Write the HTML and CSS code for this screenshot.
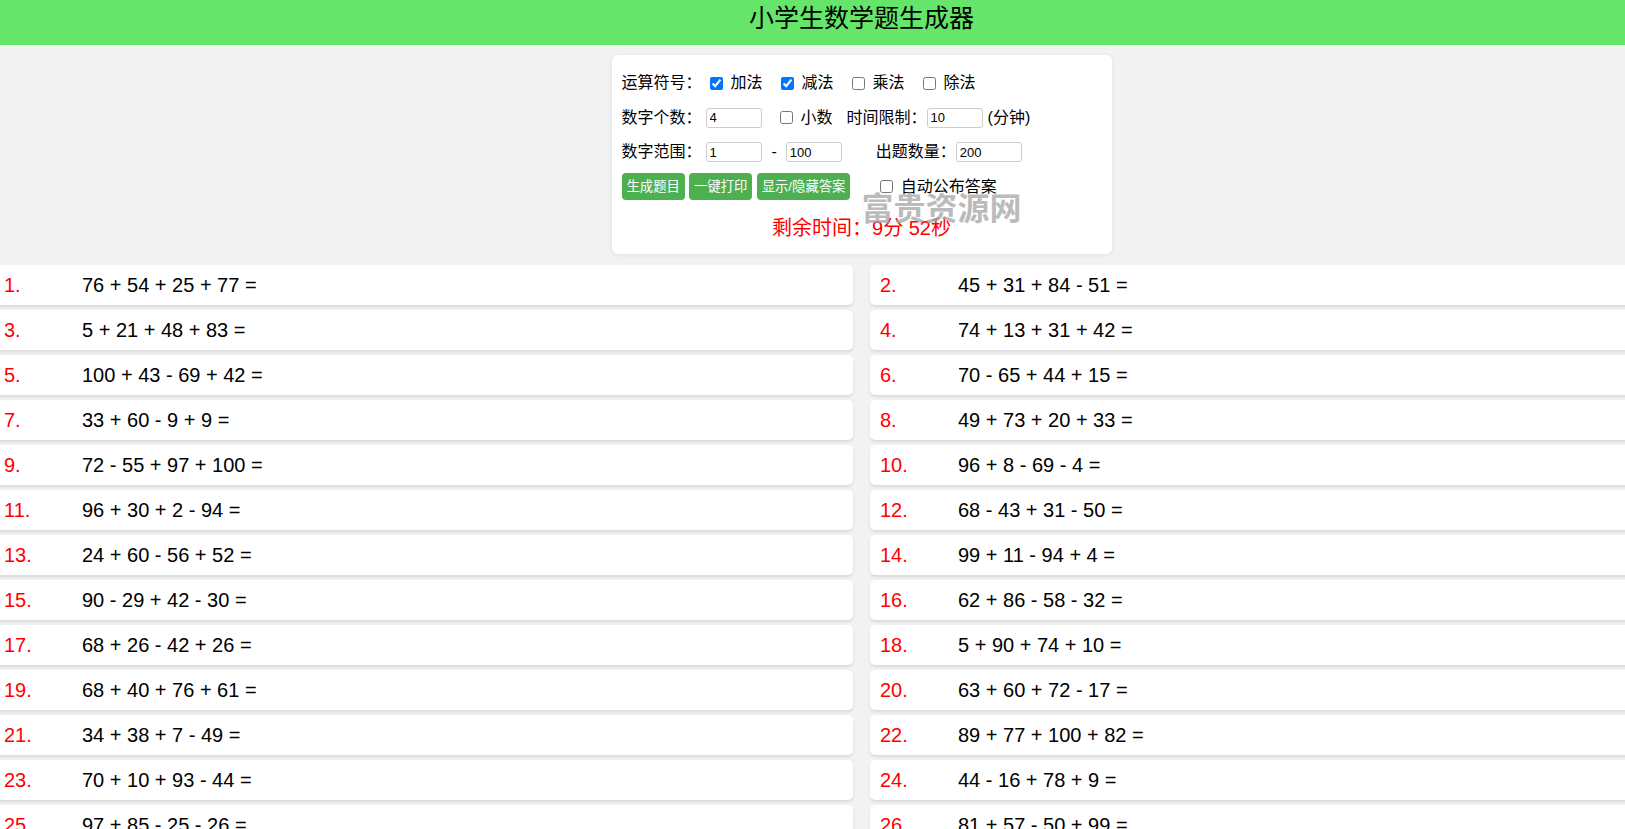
FILE: index.html
```html
<!DOCTYPE html>
<html lang="zh-CN">
<head>
  <meta charset="UTF-8" />
  <title>小学生数学题生成器</title>
  <meta name="viewport" content="width=device-width, initial-scale=1.0">
  <link rel="stylesheet" href="styles.css">
</head>
<body>
<div class="page">

<header class="top-bar">
  <h1>小学生数学题生成器</h1>
</header>

<div class="panel">
  <div class="row">
    <span class="label">运算符号：</span>
    <label class="opt"><input type="checkbox" checked><span>加法</span></label>
    <label class="opt"><input type="checkbox" checked><span>减法</span></label>
    <label class="opt"><input type="checkbox"><span>乘法</span></label>
    <label class="opt"><input type="checkbox"><span>除法</span></label>
  </div>

  <div class="row">
    <span class="label">数字个数：</span>
    <input class="field first" type="text" value="4">
    <label class="opt decimal"><input type="checkbox"><span>小数</span></label>
    <span class="label">时间限制：</span>
    <input class="field" type="text" value="10">
    <span class="unit">(分钟)</span>
  </div>

  <div class="row">
    <span class="label">数字范围：</span>
    <input class="field first" type="text" value="1">
    <span class="dash">-</span>
    <input class="field" type="text" value="100">
    <span class="label count-label">出题数量：</span>
    <input class="field wide" type="text" value="200">
  </div>

  <div class="row">
    <button class="btn">生成题目</button>
    <button class="btn">一键打印</button>
    <button class="btn">显示/隐藏答案</button>
    <label class="opt auto"><input type="checkbox"><span>自动公布答案</span></label>
  </div>

  <div class="timer">剩余时间：9分 52秒</div>

  <div class="watermark">富贵资源网</div>
</div>

<div class="questions">
  <div class="question"><span class="qnum">1.</span><span>76 + 54 + 25 + 77 =</span></div>
  <div class="question"><span class="qnum">2.</span><span>45 + 31 + 84 - 51 =</span></div>
  <div class="question"><span class="qnum">3.</span><span>5 + 21 + 48 + 83 =</span></div>
  <div class="question"><span class="qnum">4.</span><span>74 + 13 + 31 + 42 =</span></div>
  <div class="question"><span class="qnum">5.</span><span>100 + 43 - 69 + 42 =</span></div>
  <div class="question"><span class="qnum">6.</span><span>70 - 65 + 44 + 15 =</span></div>
  <div class="question"><span class="qnum">7.</span><span>33 + 60 - 9 + 9 =</span></div>
  <div class="question"><span class="qnum">8.</span><span>49 + 73 + 20 + 33 =</span></div>
  <div class="question"><span class="qnum">9.</span><span>72 - 55 + 97 + 100 =</span></div>
  <div class="question"><span class="qnum">10.</span><span>96 + 8 - 69 - 4 =</span></div>
  <div class="question"><span class="qnum">11.</span><span>96 + 30 + 2 - 94 =</span></div>
  <div class="question"><span class="qnum">12.</span><span>68 - 43 + 31 - 50 =</span></div>
  <div class="question"><span class="qnum">13.</span><span>24 + 60 - 56 + 52 =</span></div>
  <div class="question"><span class="qnum">14.</span><span>99 + 11 - 94 + 4 =</span></div>
  <div class="question"><span class="qnum">15.</span><span>90 - 29 + 42 - 30 =</span></div>
  <div class="question"><span class="qnum">16.</span><span>62 + 86 - 58 - 32 =</span></div>
  <div class="question"><span class="qnum">17.</span><span>68 + 26 - 42 + 26 =</span></div>
  <div class="question"><span class="qnum">18.</span><span>5 + 90 + 74 + 10 =</span></div>
  <div class="question"><span class="qnum">19.</span><span>68 + 40 + 76 + 61 =</span></div>
  <div class="question"><span class="qnum">20.</span><span>63 + 60 + 72 - 17 =</span></div>
  <div class="question"><span class="qnum">21.</span><span>34 + 38 + 7 - 49 =</span></div>
  <div class="question"><span class="qnum">22.</span><span>89 + 77 + 100 + 82 =</span></div>
  <div class="question"><span class="qnum">23.</span><span>70 + 10 + 93 - 44 =</span></div>
  <div class="question"><span class="qnum">24.</span><span>44 - 16 + 78 + 9 =</span></div>
  <div class="question"><span class="qnum">25.</span><span>97 + 85 - 25 - 26 =</span></div>
  <div class="question"><span class="qnum">26.</span><span>81 + 57 - 50 + 99 =</span></div>
  <div class="question"><span class="qnum">27.</span><span>38 + 12 + 56 - 21 =</span></div>
  <div class="question"><span class="qnum">28.</span><span>17 + 64 - 33 + 48 =</span></div>
</div>

</div>
</body>
</html>
```

FILE: styles.css
```css
html, body {
  margin: 0;
  padding: 0;
  background: #f2f2f2;
  font-family: "Liberation Sans", "Noto Sans CJK SC", sans-serif;
  color: #000;
}

.page {
  width: 1723px;
}

.top-bar {
  background: #65e569;
  height: 45px;
  text-align: center;
}

.top-bar h1 {
  margin: 0;
  font-size: 25px;
  font-weight: normal;
  line-height: 36px;
}

/* settings card */
.panel {
  position: relative;
  width: 500px;
  box-sizing: border-box;
  margin: 10px auto 0;
  padding: 15px 10px 14px;
  background: #fff;
  border-radius: 6px;
  box-shadow: 0 1px 4px rgba(0,0,0,0.08);
}

.row {
  display: flex;
  align-items: center;
  height: 26px;
  margin-bottom: 8.5px;
  font-size: 16px;
  line-height: 20px;
  white-space: nowrap;
}

.opt {
  display: flex;
  align-items: center;
  margin-right: 10px;
}

.opt input {
  width: 13px;
  height: 13px;
  margin: 0 8px;
}

.opt.decimal {
  margin-left: 10px;
  margin-right: 14px;
}

.opt.auto {
  margin-left: 17px;
}

.field {
  width: 56px;
  height: 20px;
  box-sizing: border-box;
  padding: 0 3px;
  border: 1px solid #ccc;
  border-radius: 3px;
  font-family: "Liberation Sans", sans-serif;
  font-size: 13px;
  color: #000;
}

.field.first {
  margin-left: 4px;
}

.field.wide {
  width: 66px;
}

.unit {
  margin-left: 5px;
}

.dash {
  margin: 0 9px 0 10px;
}

.count-label {
  margin-left: 34px;
}

.btn {
  height: 27px;
  margin-right: 4.3px;
  padding: 0 5px;
  border: none;
  border-radius: 4px;
  background: #4caf50;
  color: #fff;
  font-family: "Liberation Sans", "Noto Sans CJK SC", sans-serif;
  font-size: 13.33px;
  line-height: 17px;
}

.timer {
  margin-top: 16.5px;
  text-align: center;
  font-size: 20px;
  line-height: 24px;
  color: #f00;
}

.watermark {
  position: absolute;
  left: 250px;
  top: 138px;
  font-size: 32px;
  line-height: 32px;
  font-weight: bold;
  color: rgba(165,165,165,0.75);
  pointer-events: none;
}

/* question list */
.questions {
  display: grid;
  grid-template-columns: 1fr 1fr;
  gap: 5px 17px;
  margin: 11px -6px 0;
}

.question {
  display: flex;
  align-items: center;
  height: 40px;
  padding: 0 10px;
  background: #fff;
  border-radius: 5px;
  box-shadow: 0 2px 3px rgba(0,0,0,0.1);
  font-size: 20px;
}

.qnum {
  width: 78px;
  color: #f00;
}
```
